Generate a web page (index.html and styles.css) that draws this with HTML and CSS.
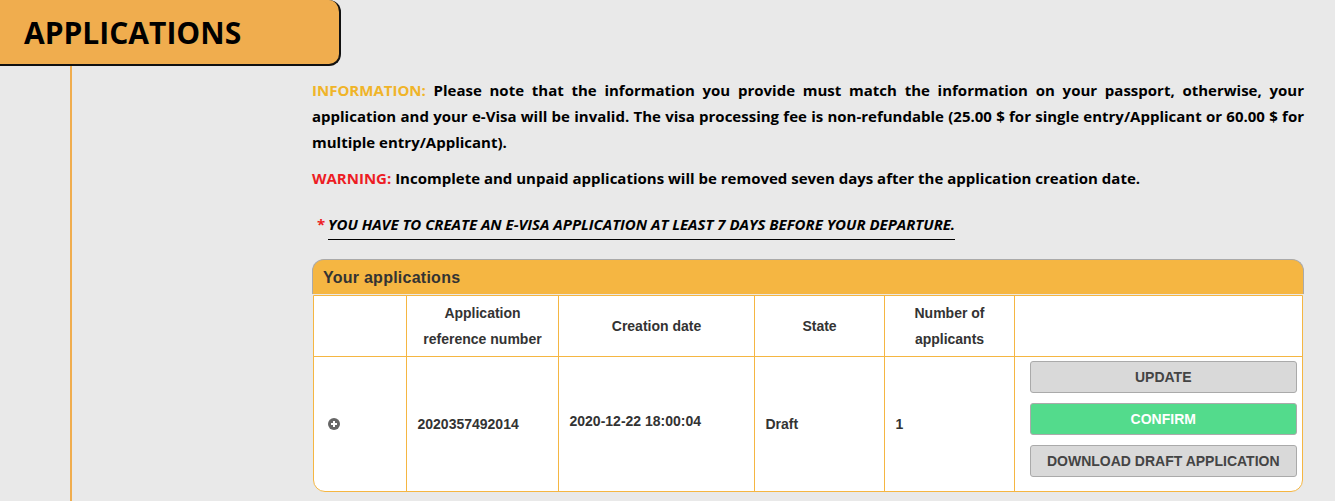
FILE: index.html
```html
<!DOCTYPE html>
<html>
<head>
  <title>Applications</title>
  <meta charset="UTF-8">
  <link rel="stylesheet" href="styles.css">
</head>
<body>
  <div class="page-title">
    <h1>APPLICATIONS</h1>
  </div>

  <div class="page-body">
    <div class="rail"></div>
    <div class="content">
      <p class="notice">
        <span class="label-info">INFORMATION:</span> Please note that the information you provide must match the information on your passport, otherwise, your application and your e-Visa will be invalid. The visa processing fee is non-refundable (25.00 $ for single entry/Applicant or 60.00 $ for multiple entry/Applicant).
      </p>
      <p class="notice warning-line">
        <span class="label-warning">WARNING:</span> Incomplete and unpaid applications will be removed seven days after the application creation date.
      </p>
      <p class="deadline">
        <span class="star">*</span>
        <span class="deadline-text">YOU HAVE TO CREATE AN E-VISA APPLICATION AT LEAST 7 DAYS BEFORE YOUR DEPARTURE.</span>
      </p>

      <div class="panel">
        <div class="panel-title">Your applications</div>
        <div class="panel-body">
          <table class="app-table">
            <thead>
              <tr>
                <th class="col-toggle"></th>
                <th class="col-ref">Application<br>reference number</th>
                <th class="col-date">Creation date</th>
                <th class="col-state">State</th>
                <th class="col-count">Number of<br>applicants</th>
                <th></th>
              </tr>
            </thead>
            <tbody>
              <tr>
                <td class="cell-toggle">
                  <svg class="plus-icon" width="12" height="12" viewBox="0 0 12 12">
                    <circle cx="6" cy="6" r="6" fill="#666"/>
                    <path d="M6 3v6M3 6h6" stroke="#fff" stroke-width="2"/>
                  </svg>
                </td>
                <td>2020357492014</td>
                <td class="cell-date">2020-12-22 18:00:04</td>
                <td>Draft</td>
                <td>1</td>
                <td class="cell-actions">
                  <button class="btn">UPDATE</button>
                  <button class="btn btn-confirm">CONFIRM</button>
                  <button class="btn">DOWNLOAD DRAFT APPLICATION</button>
                </td>
              </tr>
            </tbody>
          </table>
        </div>
      </div>
    </div>
  </div>
</body>
</html>
```

FILE: styles.css
```css
html, body {
  height: 100%;
}
body {
  margin: 0;
  background-color: #e9e9e9;
  font-family: "Open Sans", sans-serif;
  color: #000;
  overflow: hidden;
  display: flex;
  flex-direction: column;
}

.page-title {
  width: 339px;
  height: 64px;
  background-color: #f0ad4e;
  border-right: 2px solid #111;
  border-bottom: 2px solid #111;
  border-radius: 0 12px 12px 0;
  flex-shrink: 0;
}
.page-title h1 {
  margin: 0;
  padding: 15px 0 0 24px;
  font-size: 30px;
  line-height: 36px;
  font-weight: 700;
}

.page-body {
  display: flex;
  flex-grow: 1;
}
.rail {
  width: 2px;
  margin-left: 70px;
  background-color: #f0ad4e;
  flex-shrink: 0;
}
.content {
  width: 992px;
  margin-left: 240px;
  padding-top: 11px;
}

.notice {
  margin: 0 0 10px;
  font-size: 15px;
  line-height: 26px;
  font-weight: 700;
  text-align: justify;
}
.label-info {
  color: #f0b429;
}
.label-warning {
  color: #ed1c24;
}
.deadline {
  margin: 20px 0 19px 5px;
  font-size: 15px;
  line-height: 26px;
  font-weight: 700;
  font-style: italic;
  letter-spacing: -0.012px;
}
.star {
  color: #ed1c24;
  font-style: normal;
  margin-right: -1px;
}
.deadline-text {
  display: inline-block;
  border-bottom: 1px solid #000;
  padding-bottom: 2px;
}

.panel-title {
  height: 35px;
  box-sizing: border-box;
  padding-left: 10px;
  background-color: #f5b642;
  border: 1px solid #aaa;
  border-bottom: none;
  border-radius: 12px 12px 0 0;
  font-family: "Liberation Sans", Arial, sans-serif;
  font-size: 16px;
  line-height: 35px;
  font-weight: 700;
  letter-spacing: 0.25px;
  color: #333;
}
.panel-body {
  margin: 1px 1px 0;
  background-color: #fff;
  border: 1px solid #f5b642;
  border-radius: 0 0 12px 12px;
  overflow: hidden;
}

.app-table {
  width: 100%;
  border-collapse: collapse;
  border-style: hidden;
  table-layout: fixed;
  font-family: "Liberation Sans", Arial, sans-serif;
  font-size: 14px;
  font-weight: 700;
  color: #333;
}
.app-table th,
.app-table td {
  box-sizing: border-box;
  border: 1px solid #f5b642;
  padding: 0 10px 0 11px;
}
.app-table th {
  height: 60px;
  line-height: 26px;
  text-align: center;
}
.col-toggle { width: 92px; }
.col-ref { width: 152px; }
.col-date { width: 196px; }
.col-state { width: 130px; }
.col-count { width: 130px; }

.app-table th.col-ref,
.app-table th.col-count {
  padding: 0 0 0 1px;
}

.plus-icon {
  display: block;
  margin-left: 3px;
}
.app-table td.cell-date {
  padding-bottom: 6px;
}
.app-table td.cell-actions {
  padding: 4px 5px 14px 15px;
}

.btn {
  display: block;
  width: 100%;
  height: 32px;
  margin-bottom: 10px;
  padding: 0;
  background-color: #d9d9d9;
  border: 1px solid #aaa;
  border-radius: 3px;
  font-family: "Liberation Sans", Arial, sans-serif;
  font-size: 14px;
  font-weight: 700;
  color: #444;
}
.btn:last-child {
  margin-bottom: 0;
}
.btn-confirm {
  background-color: #53db8c;
  color: #fff;
}
```
